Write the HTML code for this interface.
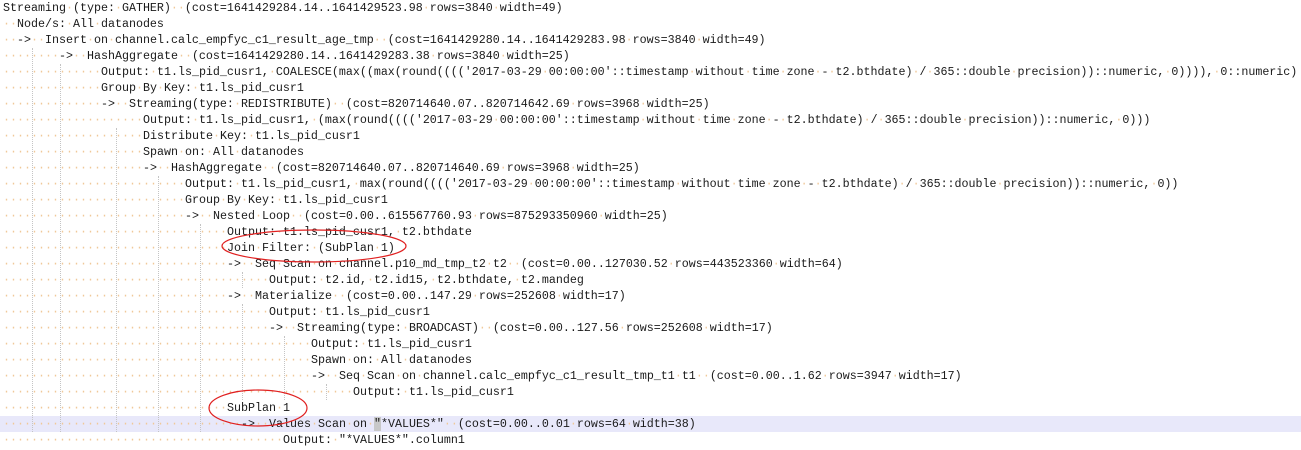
<!DOCTYPE html>
<html><head><meta charset="utf-8"><style>
html,body{margin:0;padding:0;background:#fff;width:1301px;height:450px;overflow:hidden}
#t{position:absolute;left:3px;top:0;font-family:"Liberation Mono",monospace;font-size:11.67px;line-height:16px;color:#1a1a1a;white-space:pre}
.l{height:16px;position:relative;z-index:2}
.s{color:#f0c898}
.hl{position:absolute;left:0;top:416px;width:1301px;height:16px;background:#e8e8fa;z-index:0}
.g{position:absolute;width:0;border-left:1px dotted #c4c4c4;z-index:1}
svg{position:absolute;left:0;top:0;z-index:3}
.q{position:absolute;left:374px;top:417px;width:7px;height:14px;background:#c8c8c8;z-index:1}
</style></head><body>
<div class="hl"></div>
<div class="q"></div>
<div class="g" style="left:32px;top:48px;height:384px"></div>
<div class="g" style="left:60px;top:64px;height:368px"></div>
<div class="g" style="left:116px;top:128px;height:304px"></div>
<div class="g" style="left:158px;top:176px;height:256px"></div>
<div class="g" style="left:200px;top:224px;height:208px"></div>
<div class="g" style="left:242px;top:272px;height:16px"></div>
<div class="g" style="left:242px;top:304px;height:96px"></div>
<div class="g" style="left:284px;top:336px;height:64px"></div>
<div class="g" style="left:326px;top:384px;height:16px"></div>
<div id="t"><div class="l">Streaming (type: GATHER)  (cost=1641429284.14..1641429523.98 rows=3840 width=49)</div><div class="l">  Node/s: All datanodes</div><div class="l">  ->  Insert on channel.calc_empfyc_c1_result_age_tmp  (cost=1641429280.14..1641429283.98 rows=3840 width=49)</div><div class="l">        ->  HashAggregate  (cost=1641429280.14..1641429283.38 rows=3840 width=25)</div><div class="l">              Output: t1.ls_pid_cusr1, COALESCE(max((max(round(((('2017-03-29 00:00:00'::timestamp without time zone - t2.bthdate) / 365::double precision))::numeric, 0)))), 0::numeric)</div><div class="l">              Group By Key: t1.ls_pid_cusr1</div><div class="l">              ->  Streaming(type: REDISTRIBUTE)  (cost=820714640.07..820714642.69 rows=3968 width=25)</div><div class="l">                    Output: t1.ls_pid_cusr1, (max(round(((('2017-03-29 00:00:00'::timestamp without time zone - t2.bthdate) / 365::double precision))::numeric, 0)))</div><div class="l">                    Distribute Key: t1.ls_pid_cusr1</div><div class="l">                    Spawn on: All datanodes</div><div class="l">                    ->  HashAggregate  (cost=820714640.07..820714640.69 rows=3968 width=25)</div><div class="l">                          Output: t1.ls_pid_cusr1, max(round(((('2017-03-29 00:00:00'::timestamp without time zone - t2.bthdate) / 365::double precision))::numeric, 0))</div><div class="l">                          Group By Key: t1.ls_pid_cusr1</div><div class="l">                          ->  Nested Loop  (cost=0.00..615567760.93 rows=875293350960 width=25)</div><div class="l">                                Output: t1.ls_pid_cusr1, t2.bthdate</div><div class="l">                                Join Filter: (SubPlan 1)</div><div class="l">                                ->  Seq Scan on channel.p10_md_tmp_t2 t2  (cost=0.00..127030.52 rows=443523360 width=64)</div><div class="l">                                      Output: t2.id, t2.id15, t2.bthdate, t2.mandeg</div><div class="l">                                ->  Materialize  (cost=0.00..147.29 rows=252608 width=17)</div><div class="l">                                      Output: t1.ls_pid_cusr1</div><div class="l">                                      ->  Streaming(type: BROADCAST)  (cost=0.00..127.56 rows=252608 width=17)</div><div class="l">                                            Output: t1.ls_pid_cusr1</div><div class="l">                                            Spawn on: All datanodes</div><div class="l">                                            ->  Seq Scan on channel.calc_empfyc_c1_result_tmp_t1 t1  (cost=0.00..1.62 rows=3947 width=17)</div><div class="l">                                                  Output: t1.ls_pid_cusr1</div><div class="l">                                SubPlan 1</div><div class="l">                                  ->  Values Scan on "*VALUES*"  (cost=0.00..0.01 rows=64 width=38)</div><div class="l">                                        Output: "*VALUES*".column1</div></div>
<svg width="1301" height="450">
<ellipse cx="314" cy="246" rx="92" ry="16" fill="none" stroke="#e02020" stroke-width="1.2"/>
<ellipse cx="258" cy="408" rx="49" ry="18" fill="none" stroke="#e02020" stroke-width="1.2"/>
</svg>
<script>
document.querySelectorAll('.l').forEach(function(l){
  var t=l.textContent;
  var h=t.replace(/&/g,'&amp;').replace(/</g,'&lt;').replace(/>/g,'&gt;').replace(/ /g,'<span class="s">\u00b7</span>');
  l.innerHTML=h;
});
</script>
</body></html>
